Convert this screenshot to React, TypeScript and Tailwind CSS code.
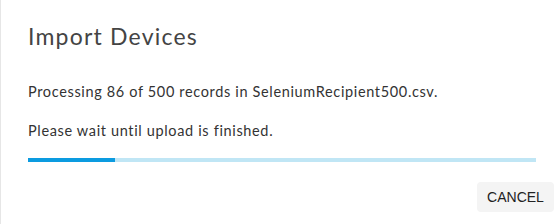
import React from 'react';

export default function App() {
  const processed = 86;
  const total = 500;
  const pct = (processed / total) * 100;

  return (
    <div className="w-[560px] h-[224px] bg-white border-l border-[#e6e6e6] flex flex-col pl-[27px] pr-[24px] text-[#333]" style={{ fontFamily: 'Lato, sans-serif' }}>
      <h2 className="text-[23px] text-[#444] mt-[21px] leading-[30px] tracking-[1.2px]">Import Devices</h2>
      <p className="text-[14.5px] mt-[31px] leading-[20px] tracking-[0.65px]">
        Processing {processed} of {total} records in SeleniumRecipient500.csv.
      </p>
      <p className="text-[14.5px] mt-[19px] leading-[20px] tracking-[0.65px]">Please wait until upload is finished.</p>
      <div className="mt-[17px] h-[4px] w-[508px] bg-[#c0e6f5]">
        <div className="h-full bg-[#0c9be0]" style={{ width: `${pct}%` }} />
      </div>
      <div className="flex justify-end mt-[20px] -mr-[18px]">
        <button className="bg-[#f4f4f4] rounded-[4px] w-[77px] h-[30px] text-[14px] text-[#222]" style={{ fontFamily: '"Liberation Sans", Arial, sans-serif' }}>
          CANCEL
        </button>
      </div>
    </div>
  );
}
